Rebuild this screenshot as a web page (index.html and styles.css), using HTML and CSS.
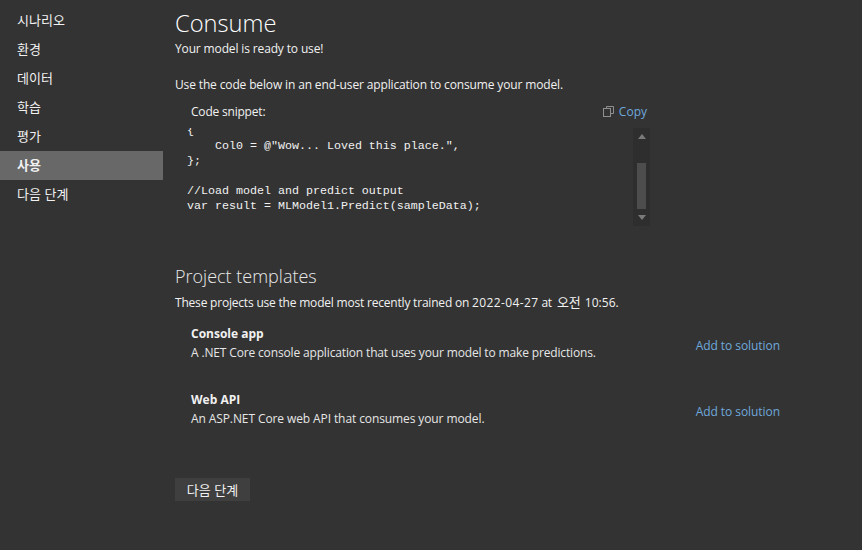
FILE: index.html
```html
<!DOCTYPE html>
<html lang="ko">
<head>
<meta charset="utf-8">
<title>Consume</title>
<link rel="stylesheet" href="styles.css">
</head>
<body>
<div class="app">
  <nav class="sidebar">
    <div class="nav-item">시나리오</div>
    <div class="nav-item">환경</div>
    <div class="nav-item">데이터</div>
    <div class="nav-item">학습</div>
    <div class="nav-item">평가</div>
    <div class="nav-item active">사용</div>
    <div class="nav-item">다음 단계</div>
  </nav>
  <main class="main">
    <h1 class="title">Consume</h1>
    <p class="line">Your model is ready to use!</p>
    <p class="line intro">Use the code below in an end-user application to consume your model.</p>
    <section class="snippet">
      <div class="snippet-head">
        <span>Code snippet:</span>
        <span class="copy">
          <svg class="copy-icon" width="11" height="11" viewBox="0 0 11 11" fill="none" stroke="#8f8f8f" stroke-width="1"><path d="M3.5 2.5V.5h7v7H8"/><rect x=".5" y="2.5" width="7" height="8"/></svg>
          <span>Copy</span>
        </span>
      </div>
      <div class="code-box">
        <div class="code-view">
          <pre class="code">{
    Col0 = @"Wow... Loved this place.",
};

//Load model and predict output
var result = MLModel1.Predict(sampleData);</pre>
        </div>
        <div class="scrollbar">
          <span class="arrow up"></span>
          <span class="track"><span class="thumb"></span></span>
          <span class="arrow down"></span>
        </div>
      </div>
    </section>
    <h2 class="subtitle">Project templates</h2>
    <p class="line trained">These projects use the model most recently trained on <span class="wide">2022-04-27</span> at <span class="ko">오전</span> <span class="time">10:56.</span></p>
    <div class="template first">
      <div>
        <div class="t-name">Console app</div>
        <div class="t-desc">A .NET Core console application that uses your model to make predictions.</div>
      </div>
      <span class="add">Add to solution</span>
    </div>
    <div class="template">
      <div>
        <div class="t-name">Web API</div>
        <div class="t-desc loose">An ASP.NET Core web API that consumes your model.</div>
      </div>
      <span class="add">Add to solution</span>
    </div>
    <button class="next">다음 단계</button>
  </main>
</div>
</body>
</html>
```
FILE: styles.css
```css
* { box-sizing: border-box; }
html, body { margin: 0; height: 100%; }
body {
  background: #333333;
  color: #f1f1f1;
  font-family: "Open Sans", "Noto Sans CJK KR", sans-serif;
  font-size: 12px;
  overflow: hidden;
}
.app { display: flex; height: 550px; }
.sidebar { width: 163px; padding-top: 6px; flex: none; }
.nav-item {
  height: 29px;
  line-height: 28px;
  padding-left: 17px;
  font-size: 13px;
  font-family: "Noto Sans CJK KR", sans-serif;
}
.nav-item.active { background: #686868; font-weight: 700; }
.main { flex: 1; padding: 8px 0 0 12px; min-width: 0; }
.title { margin: 0; font-size: 23.7px; font-weight: 300; line-height: 30px; color: #fff; }
.line { margin: 0; line-height: 18px; letter-spacing: -.14px; }
.title + .line { margin-top: 2px; }
.intro { margin-top: 18px; }
.trained { letter-spacing: -.2px; }
.wide { letter-spacing: .38px; }
.time { letter-spacing: .05px; }
.ko { font-family: "Noto Sans CJK KR", sans-serif; font-size: 13px; letter-spacing: 0; margin: 0 1px 0 2px; }
.snippet { width: 475px; margin-top: 9px; }
.snippet-head {
  display: flex;
  justify-content: space-between;
  padding: 0 3px 0 16px;
  height: 18px;
  line-height: 18px;
  letter-spacing: -.2px;
}
.copy { display: flex; align-items: center; gap: 5px; color: #6fa8dc; letter-spacing: 0; }
.copy-icon { margin-top: -2px; }
.code-box { display: flex; height: 98px; margin-top: 7px; justify-content: space-between; }
.code-view { overflow: hidden; flex: 1; padding-left: 12px; }
.code {
  margin: -4px 0 0;
  font-family: "Liberation Mono", monospace;
  font-size: 11.67px;
  line-height: 15px;
  color: #f1f1f1;
}
.scrollbar {
  width: 17px;
  flex: none;
  background: #2e2e2e;
  display: flex;
  flex-direction: column;
  align-items: center;
}
.arrow { width: 0; height: 0; border-left: 4.5px solid transparent; border-right: 4.5px solid transparent; flex: none; }
.arrow.up { border-bottom: 5px solid #7a7a7a; margin-top: 6px; }
.arrow.down { border-top: 5px solid #7a7a7a; margin-bottom: 6px; }
.track { flex: 1; width: 9px; padding-top: 24px; }
.thumb { display: block; width: 9px; height: 46px; background: #4d4d4d; }
.subtitle { margin: 38px 0 0; font-size: 18px; font-weight: 300; line-height: 24px; color: #e8e8e8; }
.subtitle + .line { margin-top: 5px; }
.template {
  display: flex;
  align-items: center;
  justify-content: space-between;
  width: 605px;
  padding-left: 16px;
  margin-top: 29px;
}
.template.first { margin-top: 13px; }
.t-name { font-weight: 700; line-height: 18px; }
.t-desc { line-height: 18px; margin-top: 1px; letter-spacing: -.15px; color: #e6e6e6; }
.t-desc.loose { letter-spacing: -.1px; }
.add { color: #6fa8dc; margin-top: 4px; letter-spacing: -.06px; }
.next {
  display: block;
  margin-top: 50px;
  width: 75px;
  height: 23px;
  padding: 0;
  border: 0;
  background: #3f3f3f;
  color: #f1f1f1;
  font-family: "Noto Sans CJK KR", sans-serif;
  font-size: 13px;
}
```
